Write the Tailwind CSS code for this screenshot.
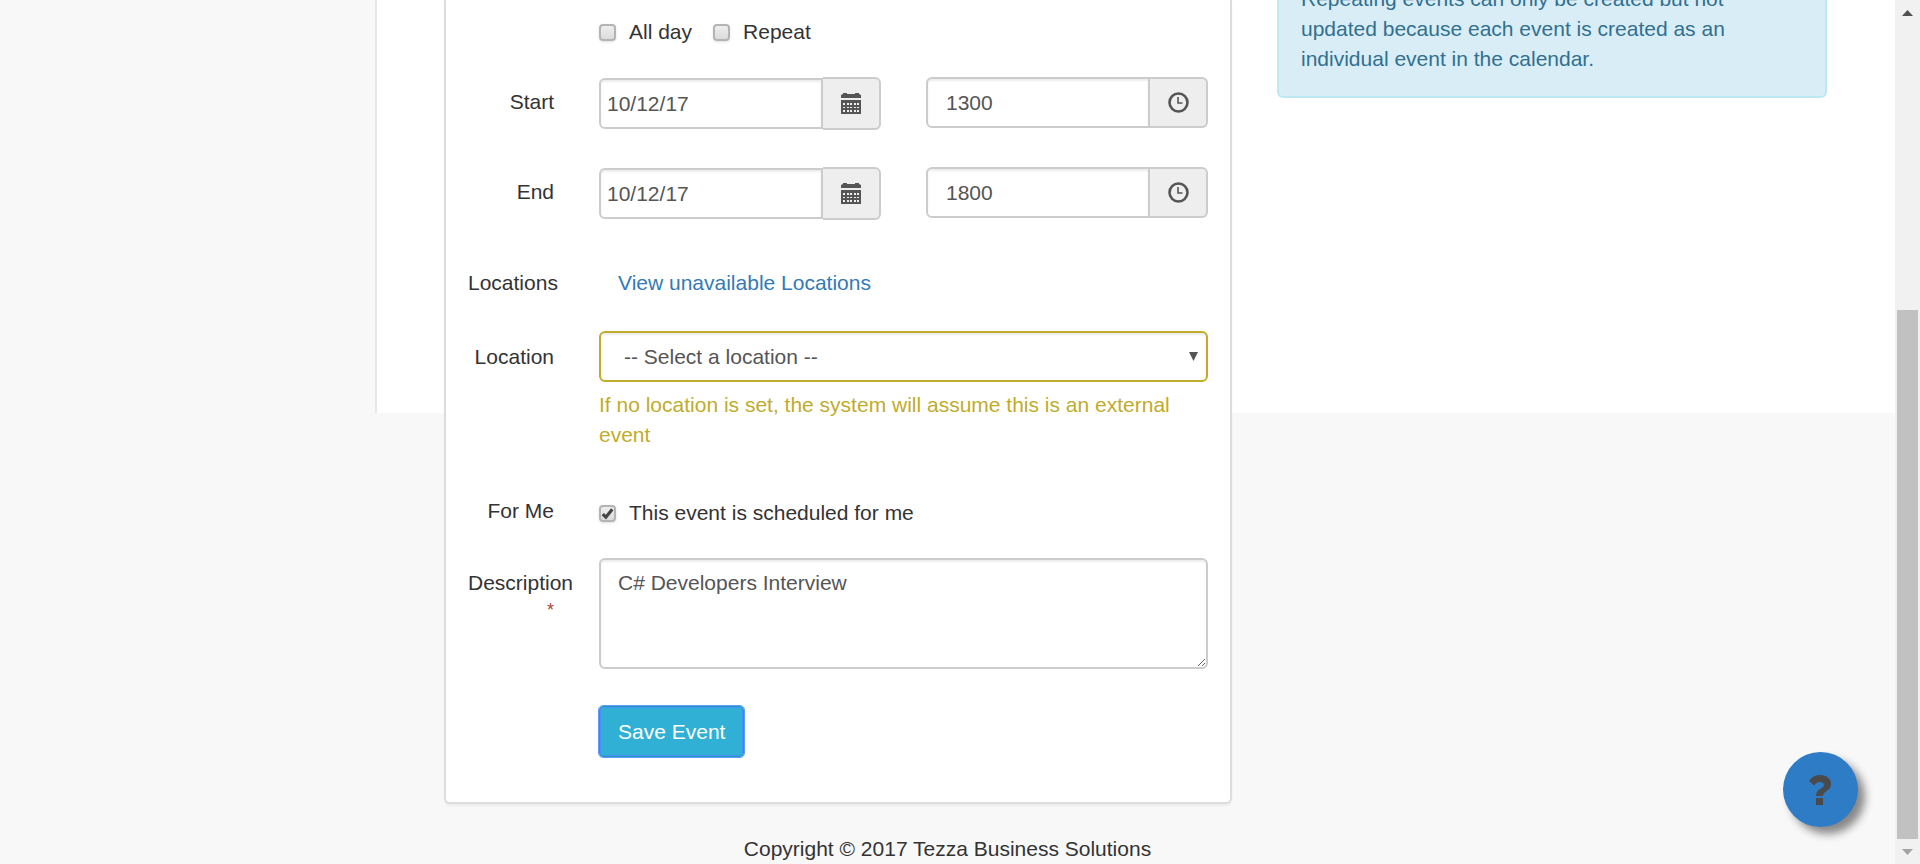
<!DOCTYPE html>
<html lang="en">
<head>
<meta charset="utf-8">
<title>Save Event</title>
<script src="https://cdn.jsdelivr.net/npm/@tailwindcss/browser@4"></script>
</head>
<body class="flex h-screen overflow-hidden bg-[#f8f8f8] font-['Liberation_Sans',Arial,sans-serif] text-[21px] leading-[30px] text-[#333]">
<svg class="hidden" aria-hidden="true">
  <symbol id="calendar" viewBox="0 0 20 21">
    <path fill="#555" d="M0 5V2l2-1V0h4v1h8V0h4v1l2 1v3zM0 7h20v14H0z"/>
    <path fill="#eee" d="M2 10h2v2H2zm4 0h2v2H6zm3 0h2v2H9zm4 0h2v2h-2zm3 0h2v2h-2zM2 14h2v1H2zm4 0h2v1H6zm3 0h2v1H9zm4 0h2v1h-2zm3 0h2v1h-2zM2 17h2v2H2zm4 0h2v2H6zm3 0h2v2H9zm4 0h2v2h-2zm3 0h2v2h-2z"/>
  </symbol>
  <symbol id="clock" viewBox="0 0 21 21">
    <circle cx="10.500" cy="10.500" r="9" fill="none" stroke="#555" stroke-width="2.600"/>
    <path d="M10 5v6h4.500" fill="none" stroke="#555" stroke-width="1.600"/>
  </symbol>
</svg>

<div class="min-w-0 flex-1">
  <div class="grid">
    <!-- page panel behind the content -->
    <div class="col-start-1 row-start-1 ml-[375px] h-[413px] self-start border-l-2 border-[#e7e7e7] bg-white"></div>

    <main class="col-start-1 row-start-1 ml-[377px] grid grid-cols-[788fr_550fr] items-start gap-[45px] pr-[68px] pl-[67px]">
      <form class="rounded-b-md border-2 border-t-0 border-[#ddd] bg-white px-[22px] pt-[17px] pb-[45px] shadow-[0_2px_2px_rgba(0,0,0,0.05)]">
        <div class="grid grid-cols-[86px_1fr] gap-x-[45px]">
          <div class="col-start-2 mb-[30px] flex gap-[21px]">
            <label class="flex items-center gap-[13px]"><input type="checkbox" class="size-[17px] appearance-none rounded-[4px] border-2 border-[#b4b4b4] bg-linear-to-b from-[#eee] to-[#dcdcdc] shadow-sm">All day</label>
            <label class="flex items-center gap-[13px]"><input type="checkbox" class="size-[17px] appearance-none rounded-[4px] border-2 border-[#b4b4b4] bg-linear-to-b from-[#eee] to-[#dcdcdc] shadow-sm">Repeat</label>
          </div>

          <label for="start" class="pt-[10px] text-right">Start</label>
          <div class="mb-[37px] grid grid-cols-2 items-start gap-[45px]">
            <div class="flex items-center">
              <input id="start" type="text" value="10/12/17" class="h-[51px] min-w-0 flex-1 rounded-l-md border-2 border-[#ccc] bg-white px-[6px] text-[#555] shadow-[inset_0_2px_2px_rgba(0,0,0,0.075)]">
              <button type="button" aria-label="Pick start date" class="flex h-[53px] w-[58px] items-center justify-center rounded-r-md border-2 border-l-0 border-[#ccc] bg-[#eee]"><svg class="h-[21px] w-5"><use href="#calendar"/></svg></button>
            </div>
            <div class="flex">
              <input aria-label="Start time" type="text" value="1300" class="h-[51px] min-w-0 flex-1 rounded-l-md border-2 border-[#ccc] bg-white px-[18px] text-[#555] shadow-[inset_0_2px_2px_rgba(0,0,0,0.075)]">
              <button type="button" aria-label="Pick start time" class="flex h-[51px] w-[58px] items-center justify-center rounded-r-md border-2 border-l-0 border-[#ccc] bg-[#eee]"><svg class="size-[21px]"><use href="#clock"/></svg></button>
            </div>
          </div>

          <label for="end" class="pt-[10px] text-right">End</label>
          <div class="mb-12 grid grid-cols-2 items-start gap-[45px]">
            <div class="flex items-center">
              <input id="end" type="text" value="10/12/17" class="h-[51px] min-w-0 flex-1 rounded-l-md border-2 border-[#ccc] bg-white px-[6px] text-[#555] shadow-[inset_0_2px_2px_rgba(0,0,0,0.075)]">
              <button type="button" aria-label="Pick end date" class="flex h-[53px] w-[58px] items-center justify-center rounded-r-md border-2 border-l-0 border-[#ccc] bg-[#eee]"><svg class="h-[21px] w-5"><use href="#calendar"/></svg></button>
            </div>
            <div class="flex">
              <input aria-label="End time" type="text" value="1800" class="h-[51px] min-w-0 flex-1 rounded-l-md border-2 border-[#ccc] bg-white px-[18px] text-[#555] shadow-[inset_0_2px_2px_rgba(0,0,0,0.075)]">
              <button type="button" aria-label="Pick end time" class="flex h-[51px] w-[58px] items-center justify-center rounded-r-md border-2 border-l-0 border-[#ccc] bg-[#eee]"><svg class="size-[21px]"><use href="#clock"/></svg></button>
            </div>
          </div>

          <span class="text-right">Locations</span>
          <div class="mb-[33px] pl-[19px]"><a href="#" class="text-[#337ab7]">View unavailable Locations</a></div>

          <label for="location" class="pt-[11px] text-right">Location</label>
          <div class="mb-[46px]">
            <div class="relative">
              <select id="location" class="block h-[51px] w-full appearance-none rounded-md border-2 border-[#bfac2b] bg-white px-[23px] text-[#555] shadow-[inset_0_2px_2px_rgba(0,0,0,0.075)]"><option>-- Select a location --</option></select>
              <svg class="pointer-events-none absolute top-[21px] right-[10px] h-[9px] w-[9px]" viewBox="0 0 9 9"><path d="M0 0h9L4.500 9z" fill="#555"/></svg>
            </div>
            <p class="mt-2 text-[#bfac2b]">If no location is set, the system will assume this is an external event</p>
          </div>

          <span class="text-right">For Me</span>
          <div class="mb-[30px] pt-[2px]">
            <label class="flex items-center gap-[13px]"><span class="relative flex"><input type="checkbox" checked class="size-[17px] appearance-none rounded-[4px] border-2 border-[#b4b4b4] bg-linear-to-b from-[#eee] to-[#dcdcdc] shadow-sm"><svg class="pointer-events-none absolute inset-0 size-[17px]" viewBox="0 0 16 16"><path d="M3.500 8.500L6.500 11.500L12.500 4" fill="none" stroke="#444" stroke-width="3"/></svg></span>This event is scheduled for me</label>
          </div>

          <label for="description" class="pt-[10px] text-right">Description <span class="block text-lg leading-6 text-[#a94442]">*</span></label>
          <textarea id="description" class="mb-[37px] block h-[111px] w-full rounded-md border-2 border-[#ccc] bg-white px-[17px] py-[8px] text-[#555] shadow-[inset_0_2px_2px_rgba(0,0,0,0.075)]">C# Developers Interview</textarea>

          <button type="submit" class="col-start-2 h-[51px] justify-self-start rounded-[4px] border border-[#269abc] bg-[#31b0d5] px-[18px] text-white outline-1 outline-[#5b9dff] ring-1 ring-[#4c8ffa] ring-inset">Save Event</button>
        </div>
      </form>

      <aside class="-mt-10 rounded-md border-2 border-[#bce8f1] bg-[#d9edf7] px-[22px] pt-[22px] pb-[22px] text-[#31708f]">
        <p class="pr-[60px]">Repeating events can only be created but not updated because each event is created as an individual event in the calendar.</p>
      </aside>
    </main>
  </div>
  <footer class="pt-[30px] text-center">Copyright © 2017 Tezza Business Solutions</footer>
</div>

<!-- scroll bar -->
<div class="flex w-[25px] flex-none flex-col items-center bg-[#f1f1f1]" aria-hidden="true">
  <div class="flex h-[25px] items-center"><svg class="h-[6px] w-[11px]" viewBox="0 0 11 6"><path d="M0 6h11L5.500 0z" fill="#505050"/></svg></div>
  <div class="flex-[285]"></div>
  <div class="w-[21px] flex-[529] bg-[#c1c1c1]"></div>
  <div class="flex h-[25px] items-center"><svg class="h-[6px] w-[11px]" viewBox="0 0 11 6"><path d="M0 0h11L5.500 6z" fill="#a3a3a3"/></svg></div>
</div>

<button type="button" aria-label="Help" class="fixed right-[62px] bottom-[37px] flex size-[75px] items-center justify-center rounded-full bg-[#2f7cc6] shadow-[7px_7px_8px_#888]">
  <svg class="mr-[2px] h-[30px] w-[22px]" viewBox="0 0 22 30"><path d="M0 6C3 2 6 0 11 0c7 0 11 4 11 9 0 7-8 7-8 12H7c0-8 8-7 8-11 0-2-1.500-3-4-3-2.500 0-4 1-6 3.500z" fill="#4a4a4a"/><path d="M7 23h7v7H7z" fill="#4a4a4a"/></svg>
</button>
</body>
</html>
